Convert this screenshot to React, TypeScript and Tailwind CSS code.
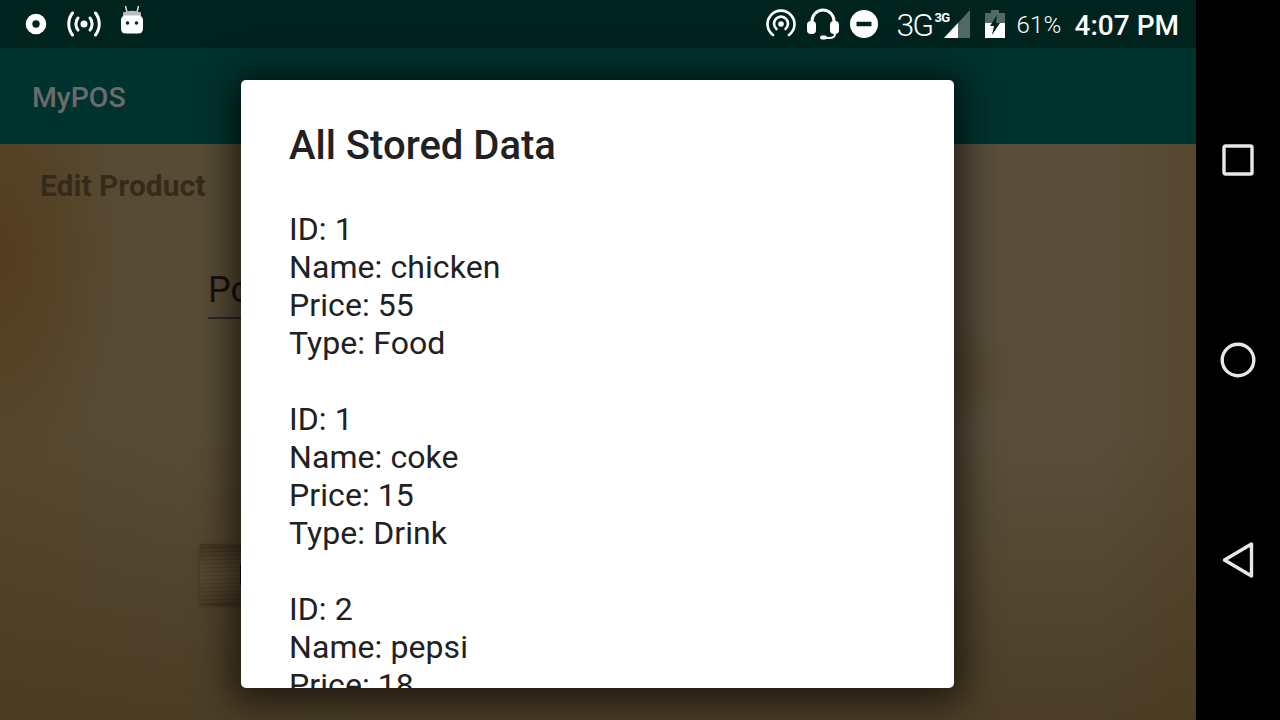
const ROBOTO = "font-['Roboto',sans-serif]";

const RECORDS = [
  { id: 1, name: "chicken", price: 55, type: "Food" },
  { id: 1, name: "coke", price: 15, type: "Drink" },
  { id: 2, name: "pepsi", price: 18, type: "Drink" },
];

function Disc() {
  return (
    <svg width="22" height="22" viewBox="0 0 22 22" className="shrink-0">
      <circle cx="11" cy="11" r="7" fill="none" stroke="#fff" strokeWidth="6.6" />
    </svg>
  );
}

function Broadcast() {
  return (
    <svg width="36" height="28" viewBox="0 0 36 28" fill="none" stroke="#fff" strokeWidth="3" strokeLinecap="round" className="shrink-0">
      <circle cx="18" cy="14" r="3.5" fill="#fff" stroke="none" />
      <path d="M12 8a9.5 9.5 0 0 0 0 12" />
      <path d="M24 8a9.5 9.5 0 0 1 0 12" />
      <path d="M6.5 3a18 18 0 0 0 0 22" />
      <path d="M29.5 3a18 18 0 0 1 0 22" />
    </svg>
  );
}

function BugDroid() {
  return (
    <svg width="24" height="30" viewBox="0 0 24 30" className="shrink-0">
      <path d="M5.5 1 7 7M18.5 1 17 7" stroke="#e8e8e8" strokeWidth="1.4" fill="none" />
      <path d="M3 7.5Q12 4 21 7.5V11H3Z" fill="#bdbdbd" />
      <rect x="1" y="10.5" width="22" height="18" rx="4.5" fill="#fff" />
      <circle cx="7.5" cy="18" r="1.8" fill="#0a2a25" />
      <circle cx="16.5" cy="18" r="1.8" fill="#0a2a25" />
    </svg>
  );
}

function Hotspot() {
  return (
    <svg width="30" height="30" viewBox="0 0 30 30" fill="none" stroke="#fff" strokeWidth="2.6" strokeLinecap="round" className="shrink-0">
      <circle cx="15" cy="15" r="2.8" fill="#fff" stroke="none" />
      <path d="M10.5 20a7 7 0 1 1 9 0" />
      <path d="M7 26a13.5 13.5 0 1 1 16 0" />
    </svg>
  );
}

function Headset() {
  return (
    <svg width="34" height="32" viewBox="0 0 34 32" className="shrink-0">
      <path d="M6 17V13a11 11 0 0 1 22 0v4" fill="none" stroke="#fff" strokeWidth="3" />
      <rect x="1" y="13" width="9" height="13" rx="4" fill="#fff" />
      <rect x="24" y="13" width="9" height="13" rx="4" fill="#fff" />
      <path d="M29 26q0 4-6 4h-5" fill="none" stroke="#fff" strokeWidth="2" />
      <rect x="14" y="27.5" width="7" height="4" rx="2" fill="#fff" />
    </svg>
  );
}

function DoNotDisturb() {
  return (
    <svg width="28" height="28" viewBox="0 0 28 28" className="shrink-0">
      <path fillRule="evenodd" d="M14 0a14 14 0 1 1 0 28a14 14 0 1 1 0-28ZM6.5 11.8v4.4h15v-4.4Z" fill="#fff" />
    </svg>
  );
}

function Signal() {
  return (
    <svg width="26" height="28" viewBox="0 0 26 28" className="shrink-0">
      <path d="M26 0V28H0Z" fill="#fff" fillOpacity="0.32" />
      <path d="M14 13V28H0Z" fill="#fff" />
    </svg>
  );
}

function Battery() {
  return (
    <svg width="20" height="28" viewBox="0 0 20 28" className="shrink-0">
      <path d="M6 0h8v3h6v25H0V3h6Z" fill="#fff" fillOpacity="0.32" />
      <path d="M0 13H20V28H0Z" fill="#fff" />
      <path d="M12 5 5 16h4l-2 9 8-12h-4Z" fill="#00231e" />
    </svg>
  );
}

function StatusBar() {
  return (
    <div className={`h-12 shrink-0 bg-[#00231e] flex items-center justify-between pl-[25px] pr-[17px] text-white ${ROBOTO}`}>
      <div className="flex items-center">
        <Disc />
        <div className="ml-[19px]"><Broadcast /></div>
        <div className="ml-[18px] mb-2"><BugDroid /></div>
      </div>
      <div className="flex items-center">
        <Hotspot />
        <div className="ml-[10px]"><Headset /></div>
        <div className="ml-[10px]"><DoNotDisturb /></div>
        <span className="ml-[19px] w-[33px] mt-[2px] text-[32px] leading-none font-light tracking-[-2px]">3G</span>
        <div className="relative ml-[14px]">
          <Signal />
          <span className="absolute left-[-9px] top-[1px] text-[13px] leading-none font-bold tracking-[-0.8px]">3G</span>
        </div>
        <div className="ml-[15px]"><Battery /></div>
        <span className="ml-[12px] mt-[2px] text-[24px] leading-none font-light tracking-[0.2px]">61%</span>
        <span className="ml-[13px] mt-[3px] text-[28px] leading-none font-medium">4:07 PM</span>
      </div>
    </div>
  );
}

function Screen() {
  return (
    <div className={`relative flex-1 overflow-hidden bg-[#5a4f3b] bg-[radial-gradient(ellipse_110px_60px_at_915px_230px,rgba(74,56,30,0.5),transparent),radial-gradient(ellipse_120px_220px_at_0px_110px,rgba(84,54,22,0.65),transparent),linear-gradient(180deg,rgba(72,58,32,0)_50%,rgba(72,58,32,0.8)_100%),linear-gradient(90deg,rgba(84,70,42,0.8)_0%,rgba(84,70,42,0)_30%,rgba(84,70,42,0)_92%,rgba(84,66,36,0.6)_100%)] ${ROBOTO}`}>
      <h1 className="absolute left-[40px] top-[24px] text-[30px] leading-[36px] font-bold text-[#372a1b]">Edit Product</h1>
      <div className="absolute left-[208px] top-[124px] w-[200px] h-[51px] border-b-2 border-[#2c2a24] text-[36px] leading-[44px] text-[#141310]">Po</div>
      <div className="absolute left-[200px] top-[400px] w-[100px] h-[60px] bg-[#54432e] bg-[repeating-linear-gradient(178deg,rgba(40,28,14,0.22)_0px,rgba(120,100,70,0.12)_2px,rgba(40,28,14,0.18)_4px),linear-gradient(180deg,rgba(50,34,18,0.5)_0%,rgba(90,72,48,0.15)_30%,rgba(110,95,70,0.25)_55%,rgba(50,34,18,0.35)_100%)] shadow-[0_2px_4px_rgba(0,0,0,0.3)]">
        <span className="absolute left-[40px] top-[21px] w-[2px] h-[20px] bg-[#14100a]" />
      </div>
    </div>
  );
}

function Dialog() {
  return (
    <div className={`absolute left-[241px] top-[80px] w-[713px] h-[608px] bg-white rounded-[5px] overflow-hidden shadow-[0_4px_36px_10px_rgba(0,0,0,0.62)] pl-[48px] pt-[42px] text-[#212121] ${ROBOTO}`}>
      <h2 className="text-[40px] leading-[48px] font-medium">All Stored Data</h2>
      <div className="mt-[40px] text-[32px] leading-[38px] tracking-[0.08px]">
        {RECORDS.map((r, i) => (
          <div key={i} className="mb-[38px]">
            <div>ID: {r.id}</div>
            <div>Name: {r.name}</div>
            <div>Price: {r.price}</div>
            <div>Type: {r.type}</div>
          </div>
        ))}
      </div>
    </div>
  );
}

function NavBar() {
  return (
    <div className="w-[84px] shrink-0 bg-black flex flex-col items-center pt-[144px]">
      <svg width="32" height="32" viewBox="0 0 32 32" fill="none" stroke="#e8e8e8" strokeWidth="3.4" strokeLinejoin="round">
        <rect x="2" y="2" width="28" height="28" rx="1.5" />
      </svg>
      <svg width="36" height="36" viewBox="0 0 36 36" fill="none" stroke="#e8e8e8" strokeWidth="3.4" className="mt-[166px]">
        <circle cx="18" cy="18" r="15.8" />
      </svg>
      <svg width="32" height="36" viewBox="0 0 32 36" fill="none" stroke="#e8e8e8" strokeWidth="3.4" strokeLinejoin="round" className="mt-[164px]">
        <path d="M29.5 2V34L2.5 18Z" />
      </svg>
    </div>
  );
}

export default function App() {
  return (
    <div className="relative w-[1280px] h-[720px] flex overflow-hidden bg-black">
      <div className="w-[1196px] shrink-0 flex flex-col">
        <StatusBar />
        <div className={`h-24 shrink-0 bg-[#00332e] flex items-center pl-[32px] pt-[4px] text-[28.4px] font-medium text-[#6b6b6b] ${ROBOTO}`}>MyPOS</div>
        <Screen />
      </div>
      <NavBar />
      <Dialog />
    </div>
  );
}
